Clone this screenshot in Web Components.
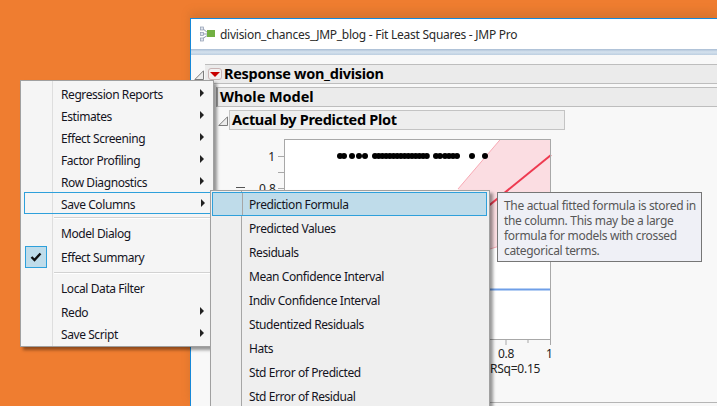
<!DOCTYPE html>
<html>
<head>
<meta charset="utf-8">
<title>Fit Least Squares</title>
<style>
  html, body { margin: 0; height: 100%; }
  body { position: relative; overflow: hidden; background: #ef7d30; font-family: "Noto Sans", "Open Sans", sans-serif; font-size: 12px; color: #111; }
</style>
</head>
<body>

<jmp-window title-text="division_chances_JMP_blog - Fit Least Squares - JMP Pro">
  <jmp-outline heading="Response won_division" level="1" menu></jmp-outline>
  <jmp-outline heading="Whole Model" level="2"></jmp-outline>
  <jmp-outline heading="Actual by Predicted Plot" level="3"></jmp-outline>
  <jmp-plot></jmp-plot>
</jmp-window>

<jmp-menu style="left:20px; top:80px; width:194px; height:267px; --gutter:31px; --gutter-color:#dedede; --item-margin:3px;">
  <jmp-item arrow>Regression Reports</jmp-item>
  <jmp-item arrow>Estimates</jmp-item>
  <jmp-item arrow>Effect Screening</jmp-item>
  <jmp-item arrow>Factor Profiling</jmp-item>
  <jmp-item arrow>Row Diagnostics</jmp-item>
  <jmp-item arrow current>Save Columns</jmp-item>
  <jmp-sep></jmp-sep>
  <jmp-item tall>Model Dialog</jmp-item>
  <jmp-item tall checked>Effect Summary</jmp-item>
  <jmp-sep></jmp-sep>
  <jmp-item tall>Local Data Filter</jmp-item>
  <jmp-item arrow>Redo</jmp-item>
  <jmp-item arrow>Save Script</jmp-item>
</jmp-menu>

<jmp-menu style="left:210px; top:190px; width:280px; height:230px; --gutter:30px; --gutter-color:#a6a6a6; --menu-bg:#efefef; --icon-col:29px; --item-margin:1px; --item-margin-right:2px; --text-pad:7px;">
  <jmp-item tall active>Prediction Formula</jmp-item>
  <jmp-item tall>Predicted Values</jmp-item>
  <jmp-item tall>Residuals</jmp-item>
  <jmp-item tall>Mean Confidence Interval</jmp-item>
  <jmp-item tall>Indiv Confidence Interval</jmp-item>
  <jmp-item tall>Studentized Residuals</jmp-item>
  <jmp-item tall>Hats</jmp-item>
  <jmp-item tall>Std Error of Predicted</jmp-item>
  <jmp-item tall>Std Error of Residual</jmp-item>
</jmp-menu>

<jmp-tooltip>The actual fitted formula is stored in<br>the column. This may be a large<br>formula for models with crossed<br>categorical terms.</jmp-tooltip>

<script>
class JmpWindow extends HTMLElement {
  constructor() {
    super();
    this.attachShadow({ mode: 'open' }).innerHTML = `
<style>
  :host { position: absolute; left: 190px; top: 18px; right: 0; bottom: 0; display: block; background: #f8f8f8; border: solid #1688d8; border-width: 1px 0 0 1px; overflow: hidden; box-shadow: 0 -6px 8px rgba(150,90,40,.25); }
  .title { height: 30px; background: #fff; display: flex; align-items: center; gap: 5px; padding-left: 9px; color: #2a2a2a; }
  .title span { letter-spacing: -.26px; }
  .band { height: 6px; background: linear-gradient(#a9bdd4, #d5e2ee 50%, #bccee0); }
  .body { padding-top: 9px; }
</style>
<div class="title">
  <svg width="15" height="16" viewBox="0 0 15 16">
    <path d="M2 2 L8 7 M2 8 H8 M2 13 L8 9" stroke="#8f9bb0" fill="none"/>
    <rect x=".5" y="1" width="3" height="3" fill="#dfe4ee" stroke="#8f9bb0" stroke-width=".7"/>
    <rect x=".5" y="6.5" width="3" height="3" fill="#dfe4ee" stroke="#8f9bb0" stroke-width=".7"/>
    <rect x=".5" y="12" width="3" height="3" fill="#dfe4ee" stroke="#8f9bb0" stroke-width=".7"/>
    <rect x="7" y="4" width="8" height="7" fill="#72b043"/>
  </svg>
  <span></span>
</div>
<div class="band"></div>
<div class="body"><slot></slot></div>`;
  }
  connectedCallback() {
    this.shadowRoot.querySelector('span').textContent = this.getAttribute('title-text');
  }
}

class JmpOutline extends HTMLElement {
  constructor() {
    super();
    this.attachShadow({ mode: 'open' }).innerHTML = `
<style>
  :host { display: flex; align-items: center; font-weight: 700; font-size: 14.5px; color: #000; letter-spacing: -.3px; }
  :host([level="1"]) { padding-left: 3px; height: 20px; margin-bottom: 3px; }
  :host([level="2"]) { padding-left: 25px; height: 20px; margin-bottom: 3px; letter-spacing: -.05px; }
  :host([level="3"]) { padding-left: 27px; height: 20px; letter-spacing: -.32px; }
  .tri { flex: none; width: 10px; height: 10px; margin-right: 1px; margin-top: 2px; }
  :host([level="2"]) .tri { display: none; }
  .bar { flex: 1; height: 100%; box-sizing: border-box; background: #ebebeb; border: solid #bdbdbd; border-width: 1px 0; display: flex; align-items: center; gap: 2px; white-space: nowrap; }
  .label { margin-top: -2px; }
  :host([level="1"]) .bar { padding-left: 3px; }
  :host([level="2"]) .bar { border-left: 2px solid #9c9c9c; padding-left: 2px; }
  :host([level="3"]) .bar { flex: none; width: 336px; border: 1px solid #c4c4c4; padding-left: 2px; background: #eeeeee; }
  .btn { display: none; width: 14px; height: 12px; box-sizing: border-box; border: 1px solid #c9b4b4; border-radius: 3px; background: #f3f1f1; align-items: center; justify-content: center; }
  :host([menu]) .btn { display: flex; }
  .btn i { width: 0; height: 0; border: solid transparent; border-width: 5px 5px 0; border-top-color: #c80000; }
</style>
<svg class="tri" viewBox="0 0 10 10"><path d="M.8 9.5 H9.5 V.8 Z" fill="#ececec" stroke="#7c7c7c"/></svg>
<div class="bar"><span class="btn"><i></i></span><span class="label"></span></div>`;
  }
  connectedCallback() {
    this.shadowRoot.querySelector('.label').textContent = this.getAttribute('heading');
  }
}

class JmpPlot extends HTMLElement {
  constructor() {
    super();
    const dots = [340, 344, 352, 359, 365];
    for (let x = 375; x <= 427; x += 3.7) dots.push(x);
    dots.push(436, 440, 445, 449, 453, 457, 472, 485);
    const circles = dots.map(x => `<circle cx="${x - 230}" cy="21" r="3"/>`).join('');
    this.attachShadow({ mode: 'open' }).innerHTML = `
<style>
  :host { display: block; margin-top: 5px; margin-left: 39px; }
  svg { display: block; }
  text { font: inherit; fill: #222; }
  .tight { letter-spacing: -.25px; }
  .rule { height: 0; border-top: 1px solid #b5b5b5; margin-top: 22px; margin-left: 260px; }
</style>
<svg width="330" height="245" viewBox="0 0 330 245">
  <rect x="54.5" y="4.5" width="266" height="200" fill="#fff"/>
  <path d="M228 54 L270.7 4 H321 V95 L260 114 Z" fill="#fbdde2"/>
  <path d="M228 54 L270.7 4" stroke="#f8a9b4" fill="none"/>
  <path d="M260 114 L321 95" stroke="#f8a9b4" fill="none"/>
  <path d="M240 86 L321 20" stroke="#ee3a50" stroke-width="2" fill="none"/>
  <path d="M160 154.5 H321" stroke="#6f9fe8" stroke-width="2" fill="none"/>
  <g fill="#000">${circles}</g>
  <rect x="54.5" y="4.5" width="266" height="200" fill="none" stroke="#a8a8a8"/>
  <path d="M48 21.5 H54 M48 37.5 H54 M48 53.5 H54 M276 205 V210 M298 205 V208 M320.5 205 V210" stroke="#a8a8a8" fill="none"/>
  <path d="M6 52.5 H15" stroke="#555" fill="none"/>
  <text x="45" y="26" text-anchor="end">1</text>
  <text x="29" y="58">0.8</text>
  <text class="tight" x="268" y="223">0.8</text>
  <text x="316" y="223">1</text>
  <text class="tight" x="260" y="238">RSq=0.15</text>
</svg>
<div class="rule"></div>`;
  }
}

class JmpMenu extends HTMLElement {
  constructor() {
    super();
    this.attachShadow({ mode: 'open' }).innerHTML = `
<style>
  :host { position: absolute; display: block; box-sizing: border-box; padding-top: 1px; border: 1px solid #a0a0a0; background: linear-gradient(var(--gutter-color), var(--gutter-color)) var(--gutter) 0 / 1px 100% no-repeat, var(--menu-bg, #f5f5f5); box-shadow: 3px 3px 3px rgba(0,0,0,.4); }
</style>
<slot></slot>`;
  }
}

class JmpItem extends HTMLElement {
  constructor() {
    super();
    this.attachShadow({ mode: 'open' }).innerHTML = `
<style>
  :host { display: grid; grid-template-columns: var(--icon-col, 28px) 1fr 14px; align-items: center; height: 22px; box-sizing: border-box; margin: 0 var(--item-margin-right, 0) 0 var(--item-margin, 2px); border: 1px solid transparent; white-space: nowrap; color: #14141e; letter-spacing: -.42px; }
  :host([tall]) { height: 24px; }
  :host([current]) { border-color: #2ea0db; border-right-width: 0; }
  :host([active]) { background: #bfdcea; border-color: #2ea0db; }
  .text { padding-left: var(--text-pad, 8px); margin-top: 3px; }
  :host([tall]) .text { margin-top: 1px; }
  .icon { height: 100%; display: flex; align-items: center; box-sizing: content-box; }
  :host([active]) .icon { box-shadow: 1px 0 0 var(--gutter-color); }
  .box { display: none; width: 22px; height: 22px; box-sizing: border-box; background: #bfdcea; border: 1px solid #2ea0db; align-items: center; justify-content: center; }
  :host([checked]) .box { display: flex; }
  .arrow { display: none; width: 0; height: 0; margin-left: 2px; border: solid transparent; border-width: 4px 0 4px 4px; border-left-color: #222; }
  :host([arrow]) .arrow { display: block; }
</style>
<div class="icon"><span class="box"><svg width="12" height="10" viewBox="0 0 12 10"><path d="M1.5 5 L4.5 8 L10.5 1.5" stroke="#111" stroke-width="2.4" fill="none"/></svg></span></div>
<div class="text"><slot></slot></div>
<i class="arrow"></i>`;
  }
}

class JmpSep extends HTMLElement {
  constructor() {
    super();
    this.attachShadow({ mode: 'open' }).innerHTML = `
<style>
  :host { display: block; height: 7px; padding-top: 3px; box-sizing: border-box; margin-left: 33px; }
  div { height: 1px; background: #d2d2d2; border-bottom: 1px solid #fff; }
</style>
<div></div>`;
  }
}

class JmpTooltip extends HTMLElement {
  constructor() {
    super();
    this.attachShadow({ mode: 'open' }).innerHTML = `
<style>
  :host { position: absolute; left: 497px; top: 192px; width: 205px; height: 70px; box-sizing: border-box; display: block; padding: 5px 6px; border: 1px solid #767676; background: #eff0f6; color: #575757; font-size: 12px; line-height: 15px; letter-spacing: -.32px; white-space: nowrap; }
</style>
<slot></slot>`;
  }
}

customElements.define('jmp-window', JmpWindow);
customElements.define('jmp-outline', JmpOutline);
customElements.define('jmp-plot', JmpPlot);
customElements.define('jmp-menu', JmpMenu);
customElements.define('jmp-item', JmpItem);
customElements.define('jmp-sep', JmpSep);
customElements.define('jmp-tooltip', JmpTooltip);
</script>
</body>
</html>
